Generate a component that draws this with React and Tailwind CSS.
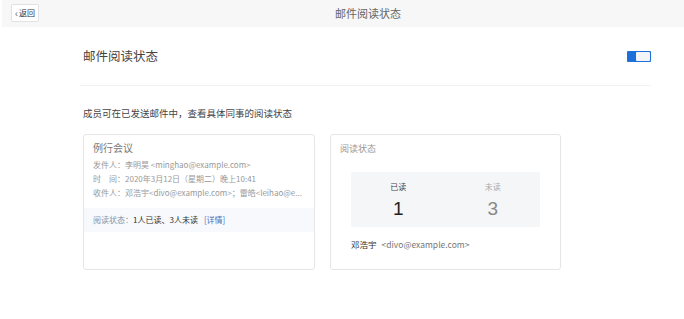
export default function App() {
  const font = { fontFamily: '"Noto Sans CJK SC", "Noto Sans", sans-serif' };
  const num = { fontFamily: '"Liberation Sans", sans-serif' };

  return (
    <div className="w-[684px] h-[319px] bg-white overflow-hidden" style={font}>
      {/* top bar */}
      <div className="ml-[2px] h-[27px] bg-[#f7f7f7] relative flex items-center justify-center pl-[50px]">
        <button className="absolute left-[9px] top-[4px] h-[18px] px-[3px] bg-white border border-[#e2e2e2] rounded-[2px] flex items-center gap-[1px] text-[8px] leading-none text-[#333]">
          <span className="text-[10px] text-[#666]">‹</span>
          <span>返回</span>
        </button>
        <span className="text-[11px] text-[#666]">邮件阅读状态</span>
      </div>

      <div className="pl-[83px] pr-[33px]">
        <div className="flex items-center justify-between pt-[19px]">
          <h1 className="text-[12.5px] leading-[20px] text-[#444]">邮件阅读状态</h1>
          <div className="w-[24px] h-[11px] rounded-[1px] bg-[#1e6fd9] flex justify-end p-[1px]">
            <div className="w-[14px] h-full bg-[#f4f5f9] rounded-[1px]" />
          </div>
        </div>

        <div className="mt-[19px] -ml-[3px] h-px bg-[#f1f1f1]" />

        <p className="mt-[20px] text-[9.5px] leading-[14px] text-[#444]">成员可在已发送邮件中，查看具体同事的阅读状态</p>

        <div className="mt-[14px] flex gap-[15px]">
          {/* mail card */}
          <div className="w-[232px] h-[136px] border border-[#e6e6e6] rounded-[3px] flex flex-col">
            <div className="px-[9px] pt-[6px]">
              <div className="text-[10px] leading-[14px] text-[#777]">例行会议</div>
              <div className="mt-[3px] text-[8px] leading-[14px] text-[#999] whitespace-nowrap">
                <div>发件人：李明昊 &lt;minghao@example.com&gt;</div>
                <div>时　间：2020年3月12日（星期二）晚上10:41</div>
                <div>收件人：邓浩宇&lt;divo@example.com&gt;；雷皓&lt;leihao@e...</div>
              </div>
            </div>
            <div className="mt-[8px] h-[24px] bg-[#f7f9fc] px-[9px] flex items-center text-[8px] whitespace-nowrap">
              <span className="text-[#8a93a3]">阅读状态：</span>
              <span className="text-[#333]">1人已读、3人未读</span>
              <span className="ml-[6px] text-[#4a6fb5]">[详情]</span>
            </div>
          </div>

          {/* read status card */}
          <div className="w-[231px] h-[136px] border border-[#e6e6e6] rounded-[3px] px-[9px] pt-[7px]">
            <div className="text-[9px] leading-[14px] text-[#999]">阅读状态</div>
            <div className="mt-[16px] mx-[11px] h-[55px] bg-[#f5f6f8] rounded-[2px] flex">
              <div className="flex-1 flex flex-col items-center pt-[9px]">
                <span className="text-[8px] leading-[12px] text-[#444]">已读</span>
                <span className="text-[19px] leading-[22px] text-[#222] mt-[5px]" style={num}>1</span>
              </div>
              <div className="flex-1 flex flex-col items-center pt-[9px]">
                <span className="text-[8px] leading-[12px] text-[#aaa]">未读</span>
                <span className="text-[19px] leading-[22px] text-[#888] mt-[5px]" style={num}>3</span>
              </div>
            </div>
            <div className="mt-[11px] ml-[11px] text-[8.5px] leading-[12px] whitespace-nowrap">
              <span className="text-[#333]">邓浩宇</span>
              <span className="ml-[5px] text-[#777]">&lt;divo@example.com&gt;</span>
            </div>
          </div>
        </div>
      </div>
    </div>
  );
}
